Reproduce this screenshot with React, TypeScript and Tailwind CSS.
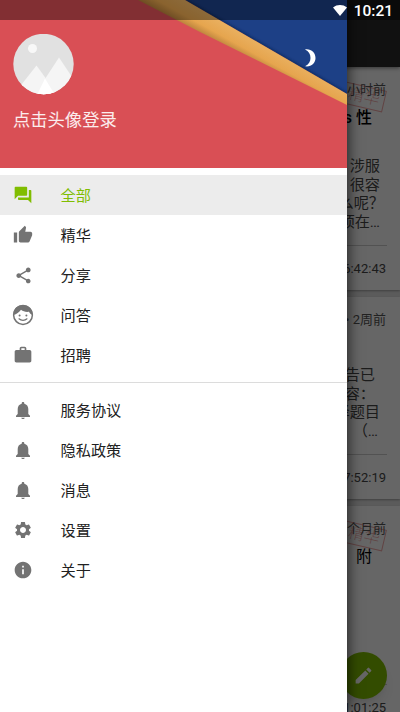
import type { ReactNode } from "react";
import clsx from "clsx";
import { MdForum, MdInfo, MdModeEdit, MdSettings, MdShare, MdThumbUp, MdWork } from "react-icons/md";

function FaceIcon() {
  return (
    <svg viewBox="0 0 24 24" className="size-[24px]" fill="none">
      <circle cx="12" cy="12" r="9.4" stroke="currentColor" strokeWidth="1.5" />
      <path
        d="M2.500 12C2 5.500 7 2 12 2s9.800 3.800 9.700 9.800c-1.900-.3-3-1.400-3.700-3-3.500.4-5.800-.4-8-2C8.200 9.300 5.500 11.300 2.500 12Z"
        fill="currentColor"
      />
      <circle cx="8.600" cy="12.400" r="1" fill="currentColor" />
      <circle cx="15.400" cy="12.400" r="1" fill="currentColor" />
      <path d="M8 15.800c2.200 2 5.800 2 8 0" stroke="currentColor" strokeWidth="1.200" strokeLinecap="round" />
    </svg>
  );
}

function BellIcon() {
  return (
    <svg viewBox="0 0 14 17" className="h-[17px] w-[14px]" fill="currentColor">
      <path d="M7 0c.8 0 1.300.5 1.300 1.300v.5C10.800 2.400 12.300 4.400 12.300 7v5L14 13.800V15H0v-1.200L1.700 12V7c0-2.600 1.500-4.600 4-5.200v-.5C5.700.5 6.200 0 7 0Z" />
      <path d="M5.200 15.700h3.600C8.600 16.600 7.900 17 7 17s-1.600-.4-1.800-1.300Z" />
    </svg>
  );
}

const tabs = [
  { label: "全部", icon: <MdForum />, active: true },
  { label: "精华", icon: <MdThumbUp /> },
  { label: "分享", icon: <MdShare className="size-[19px]" /> },
  { label: "问答", icon: <FaceIcon /> },
  { label: "招聘", icon: <MdWork /> },
];

const links = [
  { label: "服务协议", icon: <BellIcon /> },
  { label: "隐私政策", icon: <BellIcon /> },
  { label: "消息", icon: <BellIcon /> },
  { label: "设置", icon: <MdSettings /> },
  { label: "关于", icon: <MdInfo /> },
];

function MenuItem({ label, icon, active }: { label: string; icon: ReactNode; active?: boolean }) {
  return (
    <li
      className={clsx(
        "flex h-10 items-center text-[15.200px]",
        active ? "bg-[#ececec] text-[#80bd01]" : "text-[#212121]",
      )}
    >
      <span
        className={clsx(
          "ml-[11px] flex w-6 justify-center text-[20px]",
          active ? "text-[#80bd01]" : "text-[#737373]",
        )}
      >
        {icon}
      </span>
      <span className="ml-[25.500px] pt-[2px]">{label}</span>
    </li>
  );
}

function Header() {
  return (
    <header className="relative h-[168px] overflow-hidden bg-[#d94f55]">
      <svg viewBox="0 0 347 168" className="absolute inset-0 h-[168px] w-[347px]">
        <defs>
          <linearGradient id="edge" gradientUnits="userSpaceOnUse" x1="252" y1="38" x2="241" y2="58">
            <stop offset="0" stopColor="#e9b060" />
            <stop offset="0.55" stopColor="#e6a54e" />
            <stop offset="1" stopColor="#b07a38" />
          </linearGradient>
          <filter id="soft" x="-10%" y="-10%" width="120%" height="120%">
            <feGaussianBlur stdDeviation="1.5" />
          </filter>
        </defs>
        <path d="M185 0H347V94Z" fill="#1d4086" />
        <path d="M185 0 347 94" stroke="#0c2250" strokeWidth="2" filter="url(#soft)" />
        <path d="M138 0H185L347 94V105L200 32Z" fill="url(#edge)" />
      </svg>
      <div className="relative flex justify-between pt-[34px] pr-[31px] pl-[13px]">
        <svg viewBox="0 0 61 61" className="size-[61px]">
          <clipPath id="avatar">
            <circle cx="30.500" cy="30" r="30.200" />
          </clipPath>
          <g clipPath="url(#avatar)">
            <path d="M0 0h61v61H0z" fill="#e1e1e1" />
            <circle cx="19.500" cy="14.500" r="4.500" fill="#f8f8f8" />
            <path d="M30 48 46 23.500 61 46v15H30Z" fill="#f5f5f5" />
            <path d="M5 55 23.500 31.500 42 57v4H5Z" fill="#f5f5f5" />
            <path d="M32 44.500 42 61H24Z" fill="#fff" />
          </g>
        </svg>
        <svg viewBox="0 0 11 18" className="mt-[15px] h-[18px] w-[11px]">
          <path d="M0 .5C6-.5 10.500 3.800 10.500 9S6 18.300 0 17.300C3.800 15.500 5.500 12.700 5.500 9S3.800 2.300 0 .5Z" fill="#fff" />
        </svg>
      </div>
      <p className="relative mt-[14px] ml-[13px] text-[17.300px] leading-[22px] text-white/90">点击头像登录</p>
    </header>
  );
}

// rotated frame printed behind the age and title
function Stamp() {
  return (
    <span className="absolute top-[19px] right-[15px] flex h-[22px] w-[42px] rotate-[13deg] items-center justify-center border-[1.500px] border-[#e03c3c]/45 text-[16px] leading-none font-light text-[#e03c3c]/45">
      精华
    </span>
  );
}

function TopicCard({
  age,
  title,
  lines,
  time,
  className,
  titleClass,
  stamp,
}: {
  age: string;
  title: string;
  lines: { text: string; pad: string }[];
  time: string;
  className: string;
  titleClass: string;
  stamp?: boolean;
}) {
  return (
    <article
      className={clsx(
        "relative flex shrink-0 flex-col bg-white pt-[14px] text-right shadow-[0_1px_2px_rgba(0,0,0,0.3)]",
        className,
      )}
    >
      {stamp && <Stamp />}
      <p className="relative pr-[14px] text-[13px] leading-[18px] text-[#555]">{age}</p>
      <h2 className={clsx("relative pr-[28px] text-[16px] leading-6 text-[#000]", titleClass)}>{title}</h2>
      <div className="text-[15.200px] leading-[18.600px] text-[#484848]">
        {lines.map((line) => (
          <p key={line.text} className={line.pad}>
            {line.text}
          </p>
        ))}
      </div>
      <div className="mx-[13px] mt-auto flex h-[45px] items-center justify-end border-t border-[#ccc] pt-px pr-px text-[13px] text-[#484848]">
        {time}
      </div>
    </article>
  );
}

export default function App() {
  return (
    <div className="relative h-[712px] w-[400px] overflow-hidden bg-white font-[Roboto,'Noto_Sans_CJK_SC',sans-serif]">
      <main className="isolate flex h-full flex-col gap-[7px] bg-[#e4e4e4]">
        <div className="relative z-10 -mb-[7px] h-[67px] shrink-0 bg-[#2c2c2c] shadow-[0_1px_4px_rgba(0,0,0,0.5)]" />
        <TopicCard
          stamp
          age="小时前"
          title="s 性"
          lines={[
            { text: "涉服", pad: "pr-[20px]" },
            { text: "很容", pad: "pr-[20px]" },
            { text: "么呢？", pad: "pr-[16px]" },
            { text: "顶在…", pad: "pr-[20px]" },
          ]}
          time="16:42:43"
          className="h-[223px]"
          titleClass="mt-[7px] mb-[27px] font-medium"
        />
        <TopicCard
          age=" • 2周前"
          title=""
          lines={[
            { text: "告已", pad: "pr-[25px]" },
            { text: "容：", pad: "pr-[25px]" },
            { text: "择题目", pad: "pr-[20px]" },
            { text: "（…", pad: "pr-[22px]" },
          ]}
          time="17:52:19"
          className="h-[202px]"
          titleClass="h-[37px]"
        />
        <TopicCard
          stamp
          age="个月前"
          title="附"
          lines={[]}
          time="11:01:25"
          className="h-[223px]"
          titleClass="mt-[7px]"
        />
      </main>
      <div className="absolute top-[652px] left-[340px] flex size-[47px] items-center justify-center rounded-full bg-[#80bd01] text-[21px] text-white shadow-lg">
        <MdModeEdit />
      </div>
      <div className="absolute inset-0 bg-black/60" />

      <aside className="absolute inset-y-0 left-0 w-[347px] bg-white shadow-[2px_0_12px_rgba(0,0,0,0.6)]">
        <Header />
        <ul className="pt-[7px]">
          {tabs.map((item) => (
            <MenuItem key={item.label} {...item} />
          ))}
        </ul>
        <ul className="mt-[7px] border-t border-[#dcdcdc] pt-[7px]">
          {links.map((item) => (
            <MenuItem key={item.label} {...item} />
          ))}
        </ul>
      </aside>

      <div className="absolute inset-x-0 top-0 flex h-5 items-center justify-end gap-[7px] bg-black/40 pr-[7px] text-white">
        <svg viewBox="0 0 14 11" className="h-[11px] w-[14px]">
          <path d="M0 2.500C4-.8 10-.8 14 2.500L7 11Z" fill="currentColor" />
        </svg>
        <span className="pt-[2px] text-[15.500px] leading-5 font-medium">10:21</span>
      </div>
    </div>
  );
}
